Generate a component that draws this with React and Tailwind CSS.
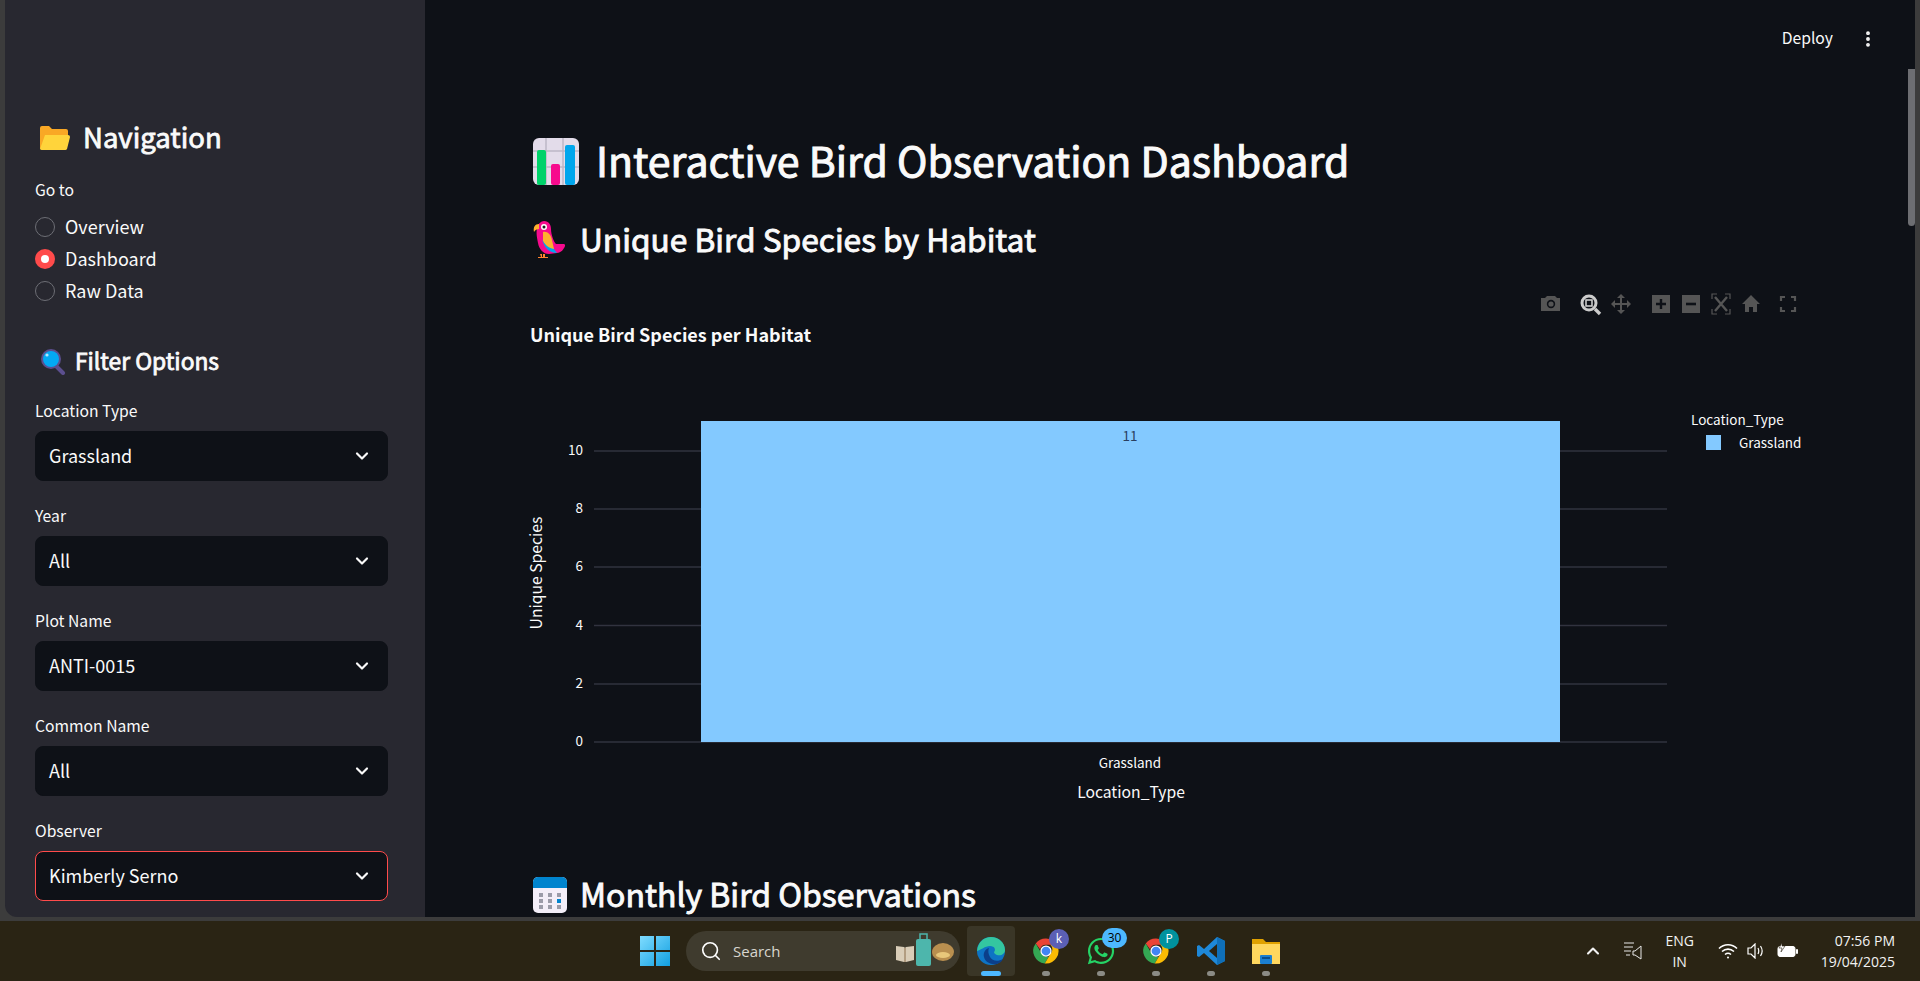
import { FaWhatsapp } from "react-icons/fa";
import { ChevronDown, Search, ChevronUp, EllipsisVertical } from "lucide-react";

const filters = [
  { label: "Location Type", value: "Grassland" },
  { label: "Year", value: "All" },
  { label: "Plot Name", value: "ANTI-0015" },
  { label: "Common Name", value: "All" },
  { label: "Observer", value: "Kimberly Serno", active: true },
];

function FolderEmoji() {
  return (
    <svg width="30" height="26" viewBox="0 0 30 26" className="shrink-0">
      <path d="M0 3a2 2 0 0 1 2-2h7l3 3h14a2 2 0 0 1 2 2v6H0z" fill="#f9a825" />
      <path d="M0 24V6h28v6z" fill="#f9a825" />
      <path d="M5 10h23a2 2 0 0 1 2 2l-3 12a2 2 0 0 1-2 1H2a2 2 0 0 1-2-1z" fill="#ffd43b" />
    </svg>
  );
}

function SearchEmoji() {
  return (
    <svg width="26" height="26" viewBox="0 0 26 26" className="shrink-0">
      <path d="M15 16l8 8" stroke="#5c4f8f" strokeWidth="4" strokeLinecap="round" />
      <circle cx="11" cy="10" r="10" fill="#5c4f8f" />
      <circle cx="11" cy="10" r="8" fill="#03a9f4" />
      <circle cx="7" cy="6" r="1.6" fill="#b3e5fc" />
    </svg>
  );
}

function ChartEmoji() {
  return (
    <svg width="46" height="47" viewBox="0 0 46 47" className="shrink-0">
      <rect width="46" height="47" rx="6" fill="#e3dcea" />
      <path d="M0 13h46M0 29h46M13 0v47M30 0v47" stroke="#bdb6c6" strokeWidth="1.5" />
      <rect x="4" y="12" width="9" height="35" rx="2" fill="#00d26a" />
      <rect x="18" y="26" width="9" height="21" rx="2" fill="#f70a8d" />
      <rect x="32" y="7" width="10" height="40" rx="2" fill="#00a6ed" />
    </svg>
  );
}

function ParrotEmoji() {
  return (
    <svg width="32" height="38" viewBox="0 0 32 38" className="shrink-0">
      <path d="M11 0c5 0 7 4 7 8 0 6 3 13 5 15h8c1 0 1 1 1 2-1 3-4 7-8 7l-8 1c-6 0-10-5-11-11-1-6-2-9-1-15 1-4 4-7 7-7z" fill="#f70a8d" />
      <path d="M10 11c4-1 8 2 9 8l2 9c-5 1-9-3-11-8z" fill="#ffb02e" />
      <path d="M9 18c2 5 6 9 12 10l3 4c-7 0-13-5-15-14z" fill="#00a6ed" />
      <circle cx="11" cy="6" r="3" fill="#fff" />
      <circle cx="11" cy="6" r="1.5" fill="#1c1c1c" />
      <path d="M6 3C2 3 0 6 1 11c1-2 3-3 5-3z" fill="#ffb02e" />
      <path d="M7 33h2v3H5v1h10v-1h-3v-3h-2v3H8z" fill="#ff822d" />
    </svg>
  );
}

function CalendarEmoji() {
  return (
    <svg width="34" height="36" viewBox="0 0 34 36" className="shrink-0">
      <rect width="34" height="36" rx="5" fill="#f3eef8" />
      <path d="M0 11V5a5 5 0 0 1 5-5h24a5 5 0 0 1 5 5v6z" fill="#0084ce" />
      <g fill="#9b9ba8">
        <rect x="6" y="16" width="4" height="4" />
        <rect x="15" y="16" width="4" height="4" />
        <rect x="24" y="16" width="4" height="4" />
        <rect x="6" y="22" width="4" height="4" />
        <rect x="15" y="22" width="4" height="4" />
        <rect x="6" y="28" width="4" height="4" />
        <rect x="15" y="28" width="4" height="4" />
        <rect x="24" y="28" width="4" height="4" />
      </g>
      <rect x="24" y="22" width="4" height="4" fill="#0084ce" />
    </svg>
  );
}

function Radio({ label, checked }) {
  return (
    <div className="flex h-8 items-center gap-[10px]">
      {checked ? (
        <span className="flex h-5 w-5 items-center justify-center rounded-full bg-[#ff4b4b]">
          <span className="h-2 w-2 rounded-full bg-white" />
        </span>
      ) : (
        <span className="h-5 w-5 rounded-full border border-[#6d6e75]" />
      )}
      <span className="pb-0.5 text-[18px] leading-5">{label}</span>
    </div>
  );
}

function FilterSelect({ label, value, active }) {
  return (
    <div className="mb-[25px]">
      <div className="h-5 text-[15.7px] leading-5">{label}</div>
      <div
        className={`mt-[10px] flex h-[50px] items-center justify-between rounded-lg border bg-[#0e1117] pl-[13px] pr-[15px] text-[18px] ${
          active ? "border-[#ff4b4b]" : "border-[#0e1117]"
        }`}
      >
        <span className="pb-0.5">{value}</span>
        <ChevronDown size={20} strokeWidth={2.6} />
      </div>
    </div>
  );
}

function Sidebar() {
  return (
    <aside className="h-full w-[420px] shrink-0 overflow-hidden rounded-bl-xl bg-[#282830] pl-[30px] pr-[37px] text-[#fafafa]">
      <div className="ml-[5px] mt-[118px] flex h-10 items-center gap-[13px] text-[27.5px] [-webkit-text-stroke:0.8px_#fafafa]">
        <FolderEmoji />
        <span className="pb-0.5">Navigation</span>
      </div>
      <div className="mt-[22px] h-5 text-[15.7px] leading-5">Go to</div>
      <div className="mt-[11px]">
        <Radio label="Overview" />
        <Radio label="Dashboard" checked />
        <Radio label="Raw Data" />
      </div>
      <div className="ml-[5px] mt-[39px] flex h-8 items-center gap-[9px] text-[22.8px] [-webkit-text-stroke:0.8px_#fafafa]">
        <SearchEmoji />
        <span className="pb-0.5">Filter Options</span>
      </div>
      <div className="mt-[23px]">
        {filters.map((f) => (
          <FilterSelect key={f.label} {...f} />
        ))}
      </div>
    </aside>
  );
}

function Modebar() {
  return (
    <g>
      <path d="M1541 298h4l2-2h8l2 2h3v13h-19z" fill="#555" />
      <circle cx="1551" cy="304" r="4.2" fill="#0e1117" />
      <circle cx="1551" cy="304" r="2.6" fill="#555" />
      <circle cx="1589" cy="303" r="7" fill="none" stroke="#ccc" strokeWidth="3" />
      <rect x="1586" y="300" width="6" height="6" fill="none" stroke="#ccc" strokeWidth="1.6" />
      <path d="M1595 309l5 5" stroke="#ccc" strokeWidth="3.4" />
      <path d="M1621 295v18M1612 304h18" stroke="#555" strokeWidth="2" />
      <path d="M1621 294l-4 4h8zM1621 314l-4-4h8zM1611 304l4-4v8zM1631 304l-4-4v8z" fill="#555" />
      <rect x="1652" y="295" width="18" height="18" fill="#555" />
      <path d="M1661 299v10M1656 304h10" stroke="#0e1117" strokeWidth="2.4" />
      <rect x="1682" y="295" width="18" height="18" fill="#555" />
      <path d="M1686 304h10" stroke="#0e1117" strokeWidth="2.6" />
      <path d="M1712 299v-5h5M1725 294h5v5M1730 309v5h-5M1717 314h-5v-5" fill="none" stroke="#555" strokeWidth="1.2" />
      <path d="M1715 297l12 14M1727 297l-12 14" stroke="#555" strokeWidth="2.4" />
      <path d="M1742 304l9-9 9 9h-3v8h-4v-5h-4v5h-4v-8z" fill="#555" />
      <path d="M1781 301v-4h4M1791 297h4v4M1795 307v4h-4M1785 311h-4v-4" fill="none" stroke="#555" strokeWidth="2.2" />
    </g>
  );
}

function BarChart() {
  const ticks = [
    [10, 451],
    [8, 509],
    [6, 567],
    [4, 625.5],
    [2, 684],
    [0, 742],
  ];
  return (
    <svg width="1300" height="580" viewBox="520 290 1300 580" className="shrink-0">
      <Modebar />
      <text x="530" y="342" className="fill-[#fafafa] text-[18px] font-bold">
        Unique Bird Species per Habitat
      </text>
      {ticks.map(([v, y]) => (
        <g key={v}>
          <line x1="594" x2="1667" y1={y} y2={y} stroke="#31333f" strokeWidth="1.5" />
          <text x="583" y={y + 4} textAnchor="end" className="fill-[#fafafa] text-[13.5px]">
            {v}
          </text>
        </g>
      ))}
      <rect x="701" y="421" width="859" height="321" fill="#83c9ff" />
      <text x="1130" y="441" textAnchor="middle" className="fill-[#2a3f5f] text-[13.5px]">
        11
      </text>
      <text x="1130" y="768" textAnchor="middle" className="fill-[#fafafa] text-[13.5px]">
        Grassland
      </text>
      <text x="1131" y="798" textAnchor="middle" className="fill-[#fafafa] text-[15.7px]">
        Location_Type
      </text>
      <text
        x="542"
        y="573"
        textAnchor="middle"
        transform="rotate(-90 542 573)"
        className="fill-[#fafafa] text-[15.7px]"
      >
        Unique Species
      </text>
      <text x="1691" y="425" className="fill-[#fafafa] text-[13.5px]">
        Location_Type
      </text>
      <rect x="1706" y="435" width="15" height="15" fill="#83c9ff" />
      <text x="1739" y="448" className="fill-[#fafafa] text-[13.5px]">
        Grassland
      </text>
    </svg>
  );
}

function MainPanel() {
  return (
    <main className="relative h-full min-w-0 flex-1 overflow-hidden bg-[#0e1117] text-[#fafafa]">
      <div className="flex h-[78px] items-center justify-end gap-[25px] pr-[37px] text-[15.7px]">
        <span className="pb-0.5">Deploy</span>
        <EllipsisVertical size={20} strokeWidth={2.6} />
      </div>
      <div className="pl-[108px]">
        <div className="mt-[53px] flex h-[60px] items-center gap-[17px] text-[41px] [-webkit-text-stroke:1px_#fafafa]">
          <ChartEmoji />
          <span className="pb-0.5">Interactive Bird Observation Dashboard</span>
        </div>
        <div className="mt-[25px] flex h-12 items-center gap-[15px] text-[31.7px] [-webkit-text-stroke:0.9px_#fafafa]">
          <ParrotEmoji />
          <span className="pb-0.5">Unique Bird Species by Habitat</span>
        </div>
      </div>
      <div className="ml-[95px] mt-[26px]">
        <BarChart />
      </div>
      <div className="ml-[108px] mt-px flex h-12 items-center gap-[13px] text-[32px] [-webkit-text-stroke:0.9px_#fafafa]">
        <CalendarEmoji />
        <span className="pb-1">Monthly Bird Observations</span>
      </div>
      {/* scroll thumb sits over the page */}
      <div className="absolute right-0 top-[69px] h-[157px] w-[7px] rounded-b bg-[#6d6e72]" />
    </main>
  );
}

function ChromeIcon() {
  return (
    <svg width="30" height="30" viewBox="0 0 48 48">
      <path d="M24 4a20 20 0 0 1 17.3 10H24a10 10 0 0 0-9.5 7L7.6 12A20 20 0 0 1 24 4z" fill="#ea4335" />
      <path d="M7.6 12l8.7 15A10 10 0 0 0 28 33.3l-6 10.6A20 20 0 0 1 7.6 12z" fill="#34a853" />
      <path d="M41.3 14A20 20 0 0 1 22 43.9l8.7-14.9A10 10 0 0 0 31 14z" fill="#fbbc04" />
      <circle cx="24" cy="24" r="8" fill="#4285f4" stroke="#fff" strokeWidth="2" />
    </svg>
  );
}

function TaskIcon({ children, dot = "bg-[#8b8b85]", badge }) {
  return (
    <div className="relative flex h-[50px] w-[55px] flex-col items-center justify-center">
      {children}
      {badge}
      <span className={`absolute bottom-0 h-[5px] w-2 rounded-full ${dot}`} />
    </div>
  );
}

function Badge({ children, color, className }) {
  return (
    <span
      className={`absolute flex items-center justify-center rounded-full text-[12px] ${color} ${className}`}
    >
      {children}
    </span>
  );
}

function Taskbar() {
  return (
    <footer className="relative flex h-[60px] shrink-0 items-center justify-center bg-[#2a2414] font-['Open_Sans',sans-serif] text-white">
      <div className="ml-[13px] flex items-center">
        <svg width="30" height="38" viewBox="0 0 30 38" className="mr-[16px]">
          <defs>
            <linearGradient id="win" x1="0" y1="0" x2="1" y2="1">
              <stop offset="0" stopColor="#7fdcff" />
              <stop offset="1" stopColor="#119fe0" />
            </linearGradient>
          </defs>
          <path d="M0 4h14v14H0zM16 4h14v14H16zM0 20h14v14H0zM16 20h14v14H16z" fill="url(#win)" />
        </svg>
        <div className="flex h-10 w-[274px] items-center rounded-full bg-[#3f3b2e] pl-[14px] pr-[6px] text-[15px] text-[#d8d6cf]">
          <Search size={22} strokeWidth={1.8} className="text-white" />
          <span className="ml-[11px] flex-1">Search</span>
          <svg width="58" height="36" viewBox="0 0 58 36">
            <path d="M0 13l8 1 1 1 1-1 8-1v14l-8 2H8l-8-2z" fill="#d9cdb8" />
            <path d="M9 15v14" stroke="#8a6d4a" />
            <rect x="20" y="6" width="15" height="27" rx="2" fill="#4db6ac" />
            <path d="M24 6V1h7v5" fill="none" stroke="#4db6ac" strokeWidth="1.5" />
            <ellipse cx="47" cy="19" rx="11" ry="9" fill="#b98f4f" />
            <ellipse cx="47" cy="22" rx="7" ry="3" fill="#e8c77a" />
          </svg>
        </div>
        <div className="ml-[3px] flex">
          <TaskIcon dot="bg-[#4db8ff] !w-[20px]">
            <div className="absolute inset-y-0 left-[4px] right-[3px] rounded bg-[#3a3627]" />
            <svg width="30" height="30" viewBox="0 0 30 30" className="relative">
              <circle cx="15" cy="15" r="14" fill="#0e74c4" />
              <path d="M1 15C2 6 8 1 15 1c8 0 14 6 14 13 0 4-4 6-8 5-3-1-3-3-3-3 2-2 1-6-4-6-5 0-9 4-13 5z" fill="#34c6a0" />
              <path d="M13 12c-4 1-6 5-5 9 1 5 7 8 13 7 3-1 5-3 6-5-5 3-11 2-13-2-2-3-2-7-1-9z" fill="#0b3f8a" />
            </svg>
          </TaskIcon>
          <TaskIcon badge={<Badge color="bg-[#5b5fb5]" className="right-[4px] top-[3px] h-5 w-5">k</Badge>}>
            <ChromeIcon />
          </TaskIcon>
          <TaskIcon badge={<Badge color="bg-[#4db8ff] text-black" className="right-[1px] top-[2px] h-5 w-[25px]">30</Badge>}>
            <FaWhatsapp size={30} color="#25d366" />
          </TaskIcon>
          <TaskIcon badge={<Badge color="bg-[#00929e]" className="right-[4px] top-[3px] h-5 w-5">P</Badge>}>
            <ChromeIcon />
          </TaskIcon>
          <TaskIcon>
            <svg width="30" height="30" viewBox="0 0 30 30">
              <path d="M21 1l8 4v20l-8 4-13-12-5 4-2-1V10l2-1 5 4z" fill="#1e88d8" />
              <path d="M21 1l8 4v20l-8 4z" fill="#0f6fb8" />
              <path d="M21 8l-8 7 8 7z" fill="#2a2414" />
            </svg>
          </TaskIcon>
          <TaskIcon>
            <svg width="30" height="30" viewBox="0 0 30 30">
              <path d="M1 3h11l3 3h14v22H1z" fill="#e0a100" />
              <path d="M1 8h28v20H1z" fill="#ffd75e" />
              <rect x="9" y="19" width="12" height="9" rx="1" fill="#1b7fd1" />
              <rect x="11" y="21" width="8" height="2" fill="#0a4f8f" />
            </svg>
          </TaskIcon>
        </div>
      </div>
      {/* system tray stays pinned to the right edge */}
      <div className="absolute right-[25px] top-0 flex h-full items-center text-[14px] text-[#f2f2f2]">
        <ChevronUp size={20} strokeWidth={2.5} className="mr-[20px]" />
        <svg width="20" height="20" viewBox="0 0 20 20" fill="none" stroke="#e8e8e8" strokeWidth="1" className="mr-[20px]">
          <path d="M1 2h10M1 6h9M1 10h7M3 14h4M12 10l6-5v13l-6-4h-2v-4z" />
        </svg>
        <div className="mr-[21px] w-[34px] text-center leading-[21px]">
          <div>ENG</div>
          <div>IN</div>
        </div>
        <svg width="20" height="16" viewBox="0 0 20 16" fill="none" stroke="#fff" strokeWidth="1.6" className="mr-[9px]">
          <path d="M1 5.5c5-5 13-5 18 0M4 8.5c3.5-3.2 8.5-3.2 12 0M7 11.5c1.8-1.5 4.2-1.5 6 0" />
          <circle cx="10" cy="14.5" r="1" fill="#fff" stroke="none" />
        </svg>
        <svg width="20" height="16" viewBox="0 0 20 16" fill="none" stroke="#fff" strokeWidth="1.2" className="mr-[10px]">
          <path d="M1 5h3l4-4v14l-4-4H1zM11 5c1 2 1 4 0 6M13.5 3c2 3 2 7 0 10" />
        </svg>
        <svg width="22" height="16" viewBox="0 0 22 16" className="mr-[22px]">
          <rect x="1" y="3.5" width="17" height="10" rx="2" fill="#fff" stroke="#fff" />
          <rect x="19" y="6" width="2" height="5" rx="1" fill="#fff" />
          <path d="M5 0L2 5h3l-1 4 4-6H5z" fill="#fff" stroke="#2a2414" strokeWidth="0.6" />
        </svg>
        <div className="text-right leading-[21px]">
          <div>07:56 PM</div>
          <div>19/04/2025</div>
        </div>
      </div>
    </footer>
  );
}

export default function App() {
  return (
    <div className="flex h-[981px] w-[1920px] flex-col overflow-hidden bg-[#3c3c3c] font-['Noto_Sans_CJK_SC',sans-serif]">
      <div className="flex h-[917px] shrink-0 px-[5px]">
        <Sidebar />
        <MainPanel />
      </div>
      <div className="h-1 shrink-0 bg-[#3c3c3c]" />
      <Taskbar />
    </div>
  );
}
